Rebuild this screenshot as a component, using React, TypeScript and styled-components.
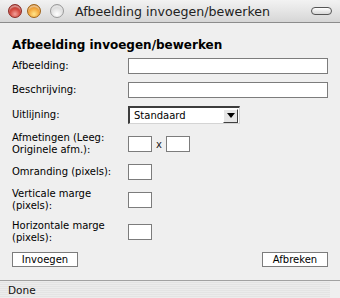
import styled, { createGlobalStyle } from "styled-components";

const GlobalStyle = createGlobalStyle`
  html, body {
    margin: 0;
    padding: 0;
    background: #ffffff;
  }
  body {
    font-family: "DejaVu Sans", Verdana, sans-serif;
  }
`;

const Window = styled.div`
  width: 340px;
  height: 298px;
  display: flex;
  flex-direction: column;
  background: #efefef;
  overflow: hidden;
`;

const TitleBar = styled.div`
  height: 22px;
  flex: none;
  display: flex;
  align-items: center;
  padding: 0 8px;
  border-radius: 5px 5px 0 0;
  border-bottom: 1px solid #8c8c8c;
  background: linear-gradient(#f2f2f2 0%, #e6e6e6 45%, #d6d6d6 100%);
`;

const Light = styled.span<{ $tone: "red" | "orange" | "gray" }>`
  width: 12px;
  height: 12px;
  border-radius: 50%;
  flex: none;
  margin-right: ${(p) => (p.$tone === "orange" ? "9px" : "5px")};
  border: 1px solid
    ${(p) => (p.$tone === "red" ? "#8a2a24" : p.$tone === "orange" ? "#a06418" : "#9a9a9a")};
  background: ${(p) =>
    p.$tone === "red"
      ? "radial-gradient(circle at 50% 75%, #f3a19a 0%, #d44b40 45%, #9c2a22 100%)"
      : p.$tone === "orange"
      ? "radial-gradient(circle at 50% 75%, #ffe58a 0%, #f3a63a 50%, #b86a16 100%)"
      : "radial-gradient(circle at 50% 75%, #ffffff 0%, #e2e2e2 50%, #b8b8b8 100%)"};
  box-shadow: inset 0 2px 1px rgba(255, 255, 255, 0.45);
`;

const WindowTitle = styled.span`
  flex: 1;
  margin-left: 6px;
  font-size: 12.6px;
  color: #222;
  white-space: nowrap;
`;

const Pill = styled.span`
  width: 19px;
  height: 6px;
  border-radius: 5px;
  border: 1px solid #555;
  background: linear-gradient(#ffffff, #d8d8d8);
`;

const Content = styled.div`
  flex: 1;
  padding: 15px 12px 0 12px;
  display: flex;
  flex-direction: column;
  color: #000;
`;

const Heading = styled.h1`
  margin: 0 0 2px 0;
  font-size: 12px;
  line-height: 14px;
  font-weight: bold;
  white-space: nowrap;
`;

const Form = styled.div`
  display: grid;
  grid-template-columns: 116px 1fr;
  align-items: center;
`;

const Label = styled.div`
  font-size: 10px;
  line-height: 12px;
  padding: 4px 6px 4px 0;
`;

const Field = styled.div`
  display: flex;
  align-items: center;
  padding: 4px 0;
  font-size: 10px;
`;

const TextBox = styled.div<{ $width?: number }>`
  width: ${(p) => (p.$width ? `${p.$width}px` : "100%")};
  height: 16px;
  box-sizing: border-box;
  background: #fff;
  border: 1px solid #7c7c7c;
`;

const Times = styled.span`
  margin: 0 4px;
  font-size: 10px;
  color: #222;
`;

const Select = styled.div`
  width: 112px;
  height: 18px;
  box-sizing: border-box;
  display: flex;
  align-items: center;
  background: #fff;
  border-top: 2px solid #3c3c3c;
  border-left: 2px solid #3c3c3c;
  border-right: 1px solid #d4d4d4;
  border-bottom: 1px solid #d4d4d4;
  font-size: 10px;
`;

const SelectText = styled.span`
  flex: 1;
  padding-left: 4px;
`;

const SelectArrow = styled.span`
  width: 15px;
  height: 14px;
  box-sizing: border-box;
  margin-right: 1px;
  display: flex;
  align-items: center;
  justify-content: center;
  background: #e6e6e6;
  border-top: 1px solid #fff;
  border-left: 1px solid #fff;
  border-right: 1px solid #404040;
  border-bottom: 1px solid #404040;
`;

const Buttons = styled.div`
  display: flex;
  justify-content: space-between;
  margin-top: 4px;
`;

const Button = styled.button`
  width: 66px;
  height: 15px;
  padding: 0;
  background: #fff;
  border: 1px solid #7c7c7c;
  border-radius: 0;
  font-family: "DejaVu Sans", Verdana, sans-serif;
  font-size: 10px;
  line-height: 13px;
  color: #000;
`;

const StatusBar = styled.div`
  height: 17px;
  flex: none;
  display: flex;
  align-items: center;
  border-top: 1px solid #a2a2a2;
  background: #efefef;
`;

const StatusText = styled.div`
  width: 322px;
  height: 100%;
  padding-left: 8px;
  display: flex;
  align-items: center;
  font-size: 10.5px;
  color: #111;
  background: repeating-linear-gradient(#ececec 0px, #ececec 1px, #e4e4e4 1px, #e4e4e4 2px);
`;

export default function App() {
  return (
    <>
      <GlobalStyle />
      <Window>
        <TitleBar>
          <Light $tone="red" />
          <Light $tone="orange" />
          <Light $tone="gray" />
          <WindowTitle>Afbeelding invoegen/bewerken</WindowTitle>
          <Pill />
        </TitleBar>
        <Content>
          <Heading>Afbeelding invoegen/bewerken</Heading>
          <Form>
            <Label>Afbeelding:</Label>
            <Field>
              <TextBox />
            </Field>

            <Label>Beschrijving:</Label>
            <Field>
              <TextBox />
            </Field>

            <Label>Uitlijning:</Label>
            <Field>
              <Select>
                <SelectText>Standaard</SelectText>
                <SelectArrow>
                  <svg width="8" height="5" viewBox="0 0 8 5">
                    <path d="M0 0 H8 L4 5 Z" fill="#000" />
                  </svg>
                </SelectArrow>
              </Select>
            </Field>

            <Label>Afmetingen (Leeg: Originele afm.):</Label>
            <Field>
              <TextBox $width={24} />
              <Times>x</Times>
              <TextBox $width={24} />
            </Field>

            <Label>Omranding (pixels):</Label>
            <Field>
              <TextBox $width={24} />
            </Field>

            <Label>Verticale marge (pixels):</Label>
            <Field>
              <TextBox $width={24} />
            </Field>

            <Label>Horizontale marge (pixels):</Label>
            <Field>
              <TextBox $width={24} />
            </Field>
          </Form>
          <Buttons>
            <Button>Invoegen</Button>
            <Button>Afbreken</Button>
          </Buttons>
        </Content>
        <StatusBar>
          <StatusText>Done</StatusText>
        </StatusBar>
      </Window>
    </>
  );
}
